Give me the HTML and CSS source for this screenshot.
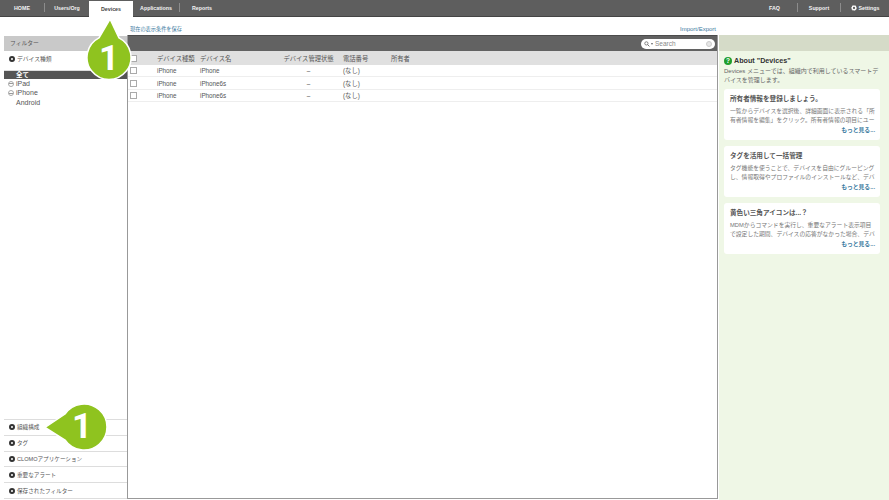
FILE: index.html
```html
<!DOCTYPE html>
<html lang="ja">
<head>
    <meta charset="UTF-8">
    <title>Devices</title>
    <link rel="stylesheet" href="styles.css">
</head>
<body>
    <!-- top nav -->
    <nav class="nav">
        <a class="nav-item home">HOME</a>
        <a class="nav-item users sep">Users/Org</a>
        <a class="nav-item devices active">Devices</a>
        <a class="nav-item apps">Applications</a>
        <a class="nav-item reports sep">Reports</a>
        <span class="nav-space"></span>
        <a class="nav-item faq">FAQ</a>
        <a class="nav-item support sep">Support</a>
        <a class="nav-item settings sep">
            <svg class="gear" viewBox="0 0 10 10"><circle cx="5" cy="5" r="3" fill="none" stroke="#fff" stroke-width="2.2"/><circle cx="5" cy="5" r="4.4" fill="none" stroke="#fff" stroke-width="1" stroke-dasharray="1.4 1.36"/></svg>
            Settings
        </a>
    </nav>

    <div class="subbar">
        <a class="save-link">現在の表示条件を保存</a>
        <a>Import/Export</a>
    </div>

    <main class="main">
        <!-- filters -->
        <aside class="filters">
            <h2 class="filters-title">フィルター</h2>
            <div class="filter-head"><i class="bullet"></i>デバイス種類</div>
            <ul class="tree">
                <li class="tree-all">全て</li>
                <li><i class="plus"></i>iPad</li>
                <li><i class="plus"></i>iPhone</li>
                <li class="tree-leaf">Android</li>
            </ul>
            <div class="filter-foot">
                <div class="filter-row"><i class="bullet"></i>組織構成</div>
                <div class="filter-row"><i class="bullet"></i>タグ</div>
                <div class="filter-row"><i class="bullet"></i>CLOMOアプリケーション</div>
                <div class="filter-row"><i class="bullet"></i>重要なアラート</div>
                <div class="filter-row"><i class="bullet"></i>保存されたフィルター</div>
            </div>
        </aside>

        <!-- device table -->
        <section class="list">
            <div class="list-bar">
                <div class="search">
                    <svg class="lens" viewBox="0 0 10 10"><circle cx="4" cy="4" r="2.7" fill="none" stroke="#666" stroke-width="1.3"/><path d="M6 6l3 3" stroke="#666" stroke-width="1.5"/></svg>
                    <span class="caret"></span>
                    <span class="search-text">Search</span>
                    <span class="search-clear"></span>
                </div>
            </div>
            <div class="row row-head">
                <span class="c-check"><i class="check"></i></span>
                <span class="c-type">デバイス種類</span>
                <span class="c-name">デバイス名</span>
                <span class="c-state">デバイス管理状態</span>
                <span class="c-tel">電話番号</span>
                <span class="c-owner">所有者</span>
            </div>
            <div class="row">
                <span class="c-check"><i class="check"></i></span>
                <span class="c-type">iPhone</span>
                <span class="c-name">iPhone</span>
                <span class="c-state">–</span>
                <span class="c-tel">(なし)</span>
            </div>
            <div class="row">
                <span class="c-check"><i class="check"></i></span>
                <span class="c-type">iPhone</span>
                <span class="c-name">iPhone6s</span>
                <span class="c-state">–</span>
                <span class="c-tel">(なし)</span>
            </div>
            <div class="row">
                <span class="c-check"><i class="check"></i></span>
                <span class="c-type">iPhone</span>
                <span class="c-name">iPhone6s</span>
                <span class="c-state">–</span>
                <span class="c-tel">(なし)</span>
            </div>
        </section>

        <!-- help panel -->
        <aside class="help">
            <div class="help-bar"></div>
            <div class="help-body">
                <h2 class="help-title"><i class="help-icon">?</i>About "Devices"</h2>
                <p class="help-lead">Devices メニューでは、組織内で利用しているスマートデバイスを管理します。</p>
                <div class="card">
                    <h3>所有者情報を登録しましょう。</h3>
                    <p>一覧からデバイスを選択後、詳細画面に表示される「所<br>有者情報を編集」をクリック。所有者情報の項目にユー</p>
                    <a>もっと見る...</a>
                </div>
                <div class="card">
                    <h3>タグを活用して一括管理</h3>
                    <p>タグ機能を使うことで、デバイスを自由にグルーピング<br>し、情報取得やプロファイルのインストールなど、デバ</p>
                    <a>もっと見る...</a>
                </div>
                <div class="card">
                    <h3>黄色い三角アイコンは...？</h3>
                    <p>MDMからコマンドを実行し、重要なアラート表示項目<br>で設定した期間、デバイスの応答がなかった場合、デバ</p>
                    <a>もっと見る...</a>
                </div>
            </div>
        </aside>
    </main>

    <!-- callouts -->
    <svg class="callout callout-top" viewBox="0 0 50 66">
        <path d="M25 2 L34 20.9 A22 22 0 1 1 14 20.9 Z" fill="#8fc31f" stroke="#fff" stroke-width="1.5"/>
        <text x="24" y="53" text-anchor="middle">1</text>
    </svg>
    <svg class="callout callout-bottom" viewBox="0 0 70 50">
        <path d="M2 25.5 L22 12 A23 23 0 1 1 22 38 Z" fill="#8fc31f" stroke="#fff" stroke-width="1.5"/>
        <text x="39" y="36" text-anchor="middle">1</text>
    </svg>
</body>
</html>
```

FILE: styles.css
```css
* {
    margin: 0;
    padding: 0;
    box-sizing: border-box;
}

html, body {
    height: 100%;
    overflow: hidden;
}

body {
    display: flex;
    flex-direction: column;
    position: relative;
    background: #fff;
    color: #444;
    font-family: "Liberation Sans", "Noto Sans CJK JP", sans-serif;
    font-size: 7px;
}

/* nav */
.nav {
    display: flex;
    align-items: center;
    height: 17px;
    background: #5e5e5e;
    border-bottom: 1px solid #444;
    color: #f4f4f4;
    font-size: 5.3px;
    font-weight: bold;
}

.nav-item {
    display: flex;
    align-items: center;
    justify-content: center;
    height: 9px;
    margin-bottom: 1px;
}

.home { width: 44px; }
.users { width: 45px; }
.devices { width: 44px; }
.apps { width: 46px; }
.reports { width: 45px; }
.faq { width: 55px; padding-left: 10px; }
.support { width: 43px; }
.settings { width: 49px; gap: 2px; }

.sep {
    border-left: 1px solid #8c8c8c;
}

.nav-space {
    flex: 1;
}

.active {
    height: 16px;
    margin: 1px 0 0;
    background: #fff;
    color: #444;
}

.gear {
    width: 6px;
    height: 6px;
}

.subbar {
    display: flex;
    justify-content: space-between;
    height: 18px;
    padding: 8px 173px 0 130px;
    color: #3b7aa0;
    font-size: 6px;
    line-height: 8px;
}

.save-link {
    font-size: 5.2px;
}

.main {
    display: flex;
    flex: 1;
    padding: 0 0 1px 4px;
    min-height: 0;
}

/* filters */
.filters {
    display: flex;
    flex-direction: column;
    width: 123px;
    padding-top: 1px;
}

.filters-title {
    height: 15px;
    padding-left: 6px;
    background: #c9c9c9;
    color: #555;
    font-size: 5.8px;
    font-weight: normal;
    line-height: 15px;
}

.filter-head {
    display: flex;
    align-items: center;
    height: 15px;
    padding-left: 5px;
    color: #555;
    font-size: 5.8px;
}

.bullet {
    width: 6px;
    height: 6px;
    margin-right: 2px;
    border: 2px solid #333;
    border-radius: 50%;
    background: #fff;
}

.tree {
    flex: 1;
    margin-top: 4px;
    list-style: none;
    border-top: 1px solid #ddd;
    color: #555;
    font-size: 7px;
    line-height: 9.4px;
}

.tree li {
    display: flex;
    align-items: center;
    height: 9.4px;
    padding-left: 4px;
}

.tree .tree-all {
    height: 8px;
    padding-left: 12px;
    background: #555;
    color: #fff;
    font-weight: bold;
    font-size: 6.5px;
}

.tree .tree-leaf {
    padding-left: 12px;
}

/* small round expander with a plus */
.plus {
    width: 6px;
    height: 6px;
    margin-right: 2px;
    border: 1px solid #aaa;
    border-radius: 50%;
    background: linear-gradient(#999, #999) center / 4px 1px no-repeat;
}

.filter-foot {
    border-bottom: 1px solid #ddd;
}

.filter-row {
    display: flex;
    align-items: center;
    height: 15.8px;
    padding-left: 5px;
    border-top: 1px solid #ddd;
    color: #555;
    font-size: 5.6px;
}

/* list */
.list {
    flex: 1;
    border: solid #999;
    border-width: 0 1px 1px;
    min-width: 0;
}

.list-bar {
    display: flex;
    justify-content: flex-end;
    align-items: center;
    height: 16px;
    padding-right: 2px;
    background: #626262;
    border-top: 1px solid #4c4c4c;
}

.search {
    display: flex;
    align-items: center;
    width: 74px;
    height: 10px;
    padding: 0 3px;
    border-radius: 5px;
    background: #fff;
    color: #888;
    font-size: 6.5px;
}

.lens {
    width: 6px;
    height: 6px;
}

.caret {
    margin: 0 2px 0 1px;
    border: 1.5px solid transparent;
    border-top: 2px solid #666;
    border-bottom: 0;
}

.search-text {
    flex: 1;
}

.search-clear {
    width: 6px;
    height: 6px;
    border: 1px solid #ccc;
    border-radius: 50%;
    background: #e6e6e6;
}

.row {
    display: flex;
    align-items: center;
    height: 12.4px;
    border-bottom: 1px solid #eee;
    color: #555;
    font-size: 6.3px;
}

.row-head {
    height: 14px;
    background: #e0e0e0;
    border-bottom: 0;
}

.c-check { width: 29px; padding-left: 2px; display: flex; }
.c-type { width: 43px; }
.c-name { width: 83px; }
.c-state { width: 60px; padding-right: 9px; text-align: center; }
.c-tel { width: 48px; }

.check {
    width: 7px;
    height: 7px;
    border: 1px solid #aaa;
    background: #fff;
}

/* help */
.help {
    width: 170px;
    margin-left: 1px;
    background: #eff7e6;
    margin-bottom: -1px;
}

.help-bar {
    height: 16px;
    background: #d5dbc8;
}

.help-body {
    padding: 0 9px 0 5px;
}

.help-title {
    display: flex;
    align-items: center;
    gap: 2px;
    margin-top: 4px;
    height: 11px;
    color: #333;
    font-size: 7.2px;
}

.help-icon {
    width: 8px;
    height: 8px;
    border-radius: 50%;
    background: #1f9e2c;
    color: #fff;
    font-size: 6.5px;
    font-style: normal;
    line-height: 8px;
    text-align: center;
}

.help-lead {
    margin: 1px 0 4px;
    color: #666;
    font-size: 6px;
    line-height: 9px;
}

.card {
    height: 51px;
    margin-bottom: 6px;
    padding: 5px 4px 0 6px;
    border-radius: 3px;
    background: #fff;
    color: #777;
    font-size: 5.8px;
}

.card h3 {
    margin-bottom: 3px;
    color: #555;
    font-size: 6.6px;
    line-height: 10px;
}

.card p {
    height: 18px;
    line-height: 9px;
    white-space: nowrap;
}

.card a {
    display: block;
    margin-top: 1px;
    padding-right: 1px;
    color: #3b7aa0;
    font-weight: bold;
    line-height: 9px;
    text-align: right;
}

/* callouts over the page */
.callout {
    position: absolute;
}

.callout text {
    fill: #fff;
    font-family: Roboto, sans-serif;
    font-size: 35px;
    font-weight: bold;
}

.callout-top {
    left: 85px;
    top: 17px;
    width: 50px;
    height: 66px;
}

.callout-bottom {
    left: 43px;
    top: 402px;
    width: 70px;
    height: 50px;
}
```
